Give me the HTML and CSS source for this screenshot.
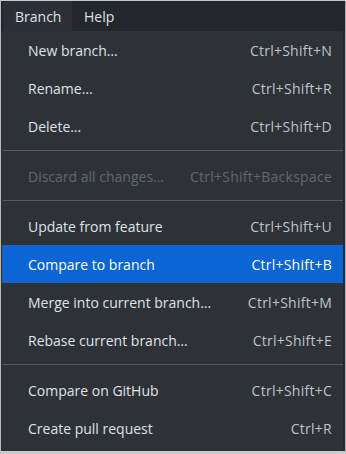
FILE: index.html
```html
<!DOCTYPE html>
<html lang="en">
<head>
    <meta charset="UTF-8">
    <title>Branch menu</title>
    <link rel="stylesheet" href="styles.css">
</head>
<body>
    <div id="frame">
        <nav id="menubar">
            <div class="top-item open">Branch</div>
            <div class="top-item">Help</div>
        </nav>
        <div id="menu">
            <div class="item"><span>New branch…</span><span class="key">Ctrl+Shift+N</span></div>
            <div class="item"><span>Rename…</span><span class="key">Ctrl+Shift+R</span></div>
            <div class="item"><span>Delete…</span><span class="key">Ctrl+Shift+D</span></div>
            <div class="sep"></div>
            <div class="item disabled"><span>Discard all changes…</span><span class="key">Ctrl+Shift+Backspace</span></div>
            <div class="sep"></div>
            <div class="item"><span>Update from feature</span><span class="key">Ctrl+Shift+U</span></div>
            <div class="item selected"><span>Compare to branch</span><span class="key">Ctrl+Shift+B</span></div>
            <div class="item"><span>Merge into current branch…</span><span class="key">Ctrl+Shift+M</span></div>
            <div class="item"><span>Rebase current branch…</span><span class="key">Ctrl+Shift+E</span></div>
            <div class="sep"></div>
            <div class="item"><span>Compare on GitHub</span><span class="key">Ctrl+Shift+C</span></div>
            <div class="item"><span>Create pull request</span><span class="key">Ctrl+R</span></div>
        </div>
    </div>
</body>
</html>
```

FILE: styles.css
```css
html, body {
    margin: 0;
    width: 346px;
    height: 454px;
    overflow: hidden;
    background: #c9cacc;
}
#frame {
    box-sizing: border-box;
    width: 346px;
    height: 454px;
    border-top: 1px solid #c9cacc;
    border-left: 1px solid #b8babd;
    border-right: 1px solid #a9abae;
    border-bottom: 3px solid #c9cacc;
    background: #2b2f34;
    font-family: "Open Sans", "Noto Sans", sans-serif;
    font-size: 14px;
    color: #dfe2e6;
    display: flex;
    flex-direction: column;
}
#menubar {
    height: 30px;
    flex-shrink: 0;
    display: flex;
    background: #23272c;
    padding-left: 2px;
}
.top-item {
    display: flex;
    align-items: center;
    padding: 0 12px;
    height: 100%;
}
.top-item.open {
    background: #2c3036;
    width: 45px;
}
#menu {
    flex: 1;
    background: #2e3237;
    margin: 0 1px;
    border-right: 1px solid #25282c;
    box-sizing: border-box;
}
.item {
    height: 38px;
    display: flex;
    align-items: center;
    justify-content: space-between;
    padding: 0 11px 0 26px;
}
.item .key {
    color: #bfc3c8;
    letter-spacing: 0.25px;
}
.item.disabled,
.item.disabled .key {
    color: #62676d;
}
.item.selected {
    background: #0b65d4;
    color: #ffffff;
}
.item.selected .key {
    color: #ffffff;
}
.sep {
    height: 1px;
    background: #575c63;
    margin: 5px 0 6px 1px;
}
```
